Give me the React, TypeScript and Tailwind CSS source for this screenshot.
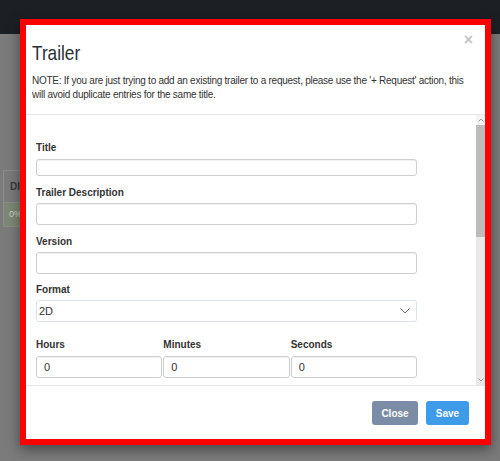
import React from "react";

const font = { fontFamily: '"Liberation Sans", Arial, sans-serif' };

function Label({ children, className = "" }: { children: React.ReactNode; className?: string }) {
  return (
    <div className={"text-[10px] leading-[14px] font-bold text-[#333] " + className}>{children}</div>
  );
}

function TextInput({ h = "h-[22px]", value = "", className = "" }: { h?: string; value?: string; className?: string }) {
  return (
    <div
      className={
        "border border-[#cfcfcf] rounded-[3px] bg-white shadow-[inset_0_1px_1px_rgba(0,0,0,0.06)] flex items-center px-[7px] text-[11px] text-[#333] " +
        h +
        " " +
        className
      }
    >
      {value}
    </div>
  );
}

export default function App() {
  return (
    <div className="relative w-[500px] h-[461px] bg-[#7b7b7b] overflow-hidden" style={font}>
      <div className="h-[34px] bg-[#1c2025]" />
      {/* background table fragment */}
      <div className="absolute left-0 top-[170px] w-[20px]">
        <div className="h-[33px] border-t border-b border-l border-[#8c8c8c] ml-[3px] flex items-center pl-[6px] text-[10px] font-bold text-[#3a3a3a]">
          DI
        </div>
        <div className="h-[24px] bg-[#7c8874] border-l border-b border-[#8c8c8c] ml-[3px] flex items-center pl-[5px] text-[9px] text-[#d0d0d0]">
          0%
        </div>
      </div>

      {/* modal */}
      <div className="absolute left-[20px] top-[19px] w-[471px] h-[426px] border-[6px] border-[#ff0000] bg-white shadow-[0_4px_12px_rgba(0,0,0,0.45)] flex flex-col">
        {/* header */}
        <div className="relative pl-[6px] pr-[20px] pt-[16px] pb-[12px] border-b border-[#e5e5e5]">
          <div className="absolute right-[12px] top-[7px] text-[16px] leading-[16px] font-bold text-[#c4c4c4]">×</div>
          <div className="text-[21px] leading-[24px] text-[#2a2f36] origin-left scale-x-[0.82]">Trailer</div>
          <div className="mt-[9px] text-[10px] leading-[14px] tracking-[-0.25px] text-[#333]">
            NOTE: If you are just trying to add an existing trailer to a request, please use the '+ Request' action, this will avoid duplicate entries for the same title.
          </div>
        </div>

        {/* body */}
        <div className="flex h-[271px] border-b border-[#e5e5e5] overflow-hidden">
          <div className="flex-1 pl-[10px] pt-[26px]">
            <div className="w-[381px]">
              <Label>Title</Label>
              <TextInput h="h-[17px]" className="mt-[4px]" />
              <Label className="mt-[10px]">Trailer Description</Label>
              <TextInput className="mt-[3px]" />
              <Label className="mt-[10px]">Version</Label>
              <TextInput className="mt-[3px]" />
              <Label className="mt-[9px]">Format</Label>
              <div className="mt-[3px] h-[22px] border border-[#d9e3ee] rounded-[3px] flex items-center justify-between pl-[2px] pr-[6px] text-[11px] text-[#333]">
                <span>2D</span>
                <svg width="10" height="6" viewBox="0 0 10 6" fill="none" stroke="#666" strokeWidth="1">
                  <path d="M0.5 0.5 L5 5 L9.5 0.5" />
                </svg>
              </div>
              <div className="mt-[16px] grid grid-cols-3 gap-x-[1px]">
                <Label>Hours</Label>
                <Label>Minutes</Label>
                <Label>Seconds</Label>
                <TextInput value="0" className="mt-[4px]" />
                <TextInput value="0" className="mt-[4px]" />
                <TextInput value="0" className="mt-[4px]" />
              </div>
            </div>
          </div>
          {/* scrollbar */}
          <div className="w-[9px] bg-[#e9e9e9] flex flex-col">
            <div className="h-[10px] bg-[#f4f4f4] flex items-center justify-center">
              <svg width="6" height="4" viewBox="0 0 6 4" fill="none" stroke="#9a9a9a" strokeWidth="1">
                <path d="M0.5 3.5 L3 1 L5.5 3.5" />
              </svg>
            </div>
            <div className="h-[112px] bg-[#bcbcbc]" />
            <div className="flex-1" />
            <div className="h-[10px] flex items-center justify-center">
              <svg width="6" height="4" viewBox="0 0 6 4" fill="none" stroke="#9a9a9a" strokeWidth="1">
                <path d="M0.5 0.5 L3 3 L5.5 0.5" />
              </svg>
            </div>
          </div>
        </div>

        {/* footer */}
        <div className="flex justify-end gap-[8px] pt-[15px] pr-[16px]">
          <button className="w-[46px] h-[24px] rounded-[3px] bg-[#7b8ca6] text-white text-[10px] font-bold">Close</button>
          <button className="w-[43px] h-[24px] rounded-[3px] bg-[#3e9be9] text-white text-[10px] font-bold">Save</button>
        </div>
      </div>
    </div>
  );
}
